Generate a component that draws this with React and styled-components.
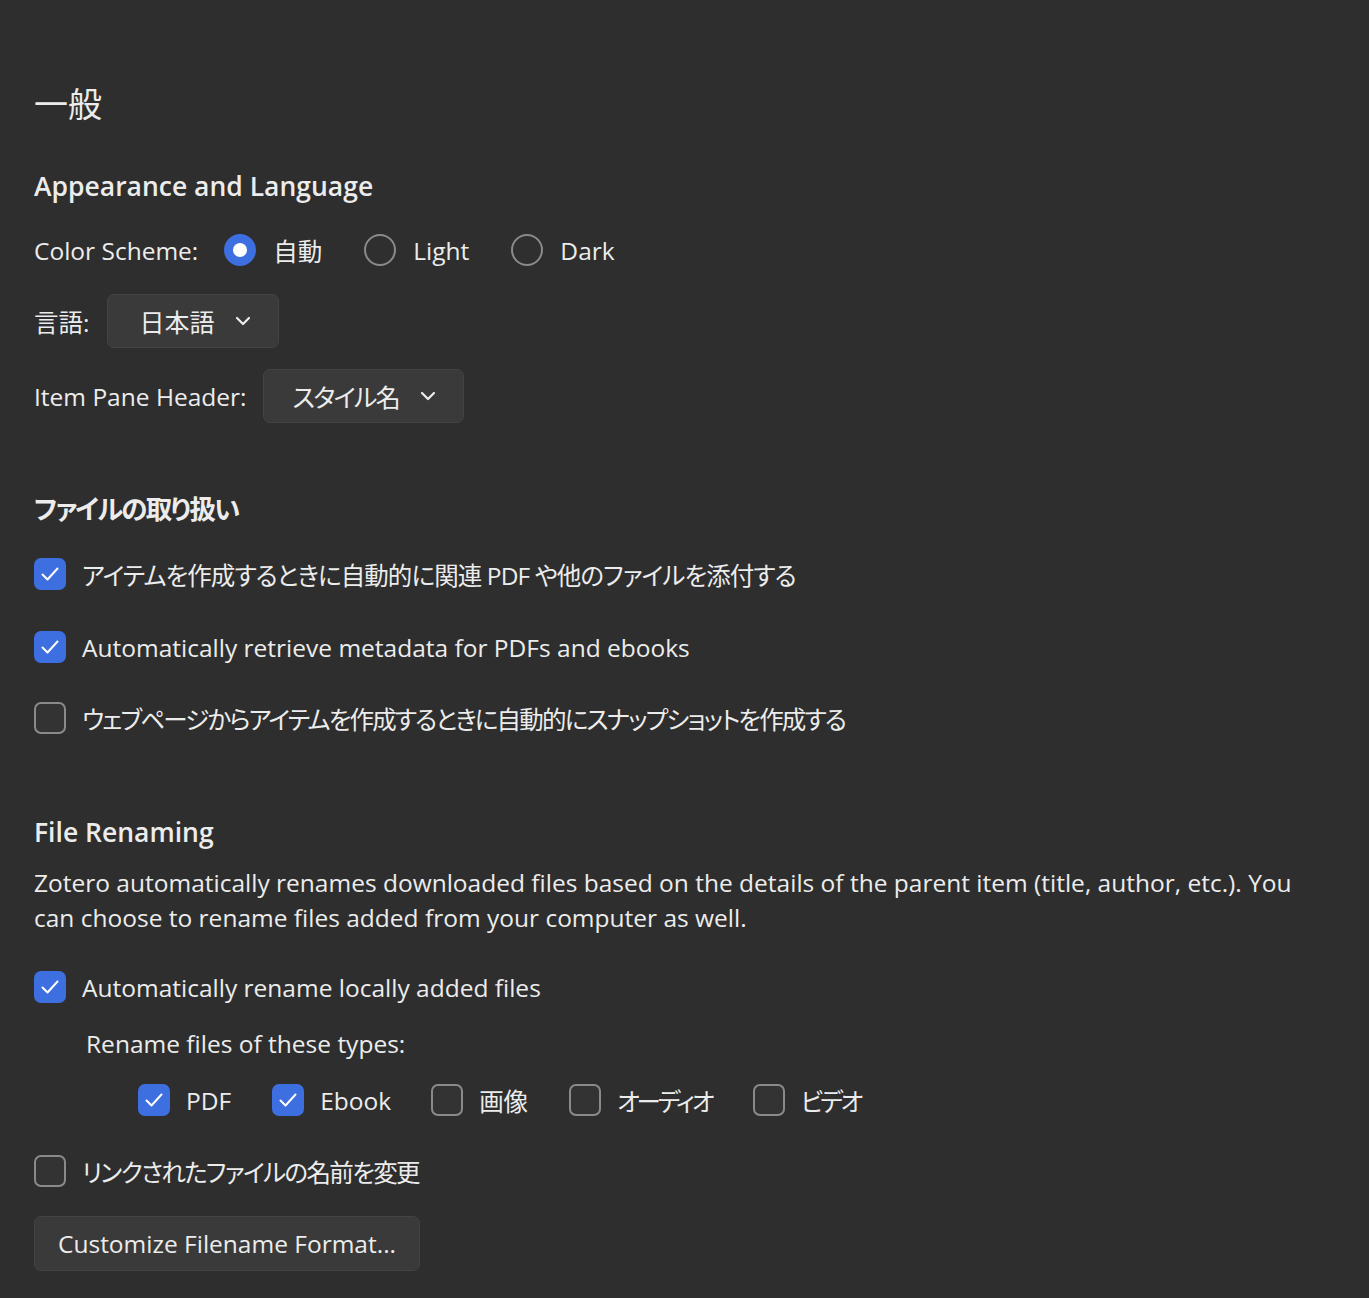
import React from "react";
import styled, { createGlobalStyle } from "styled-components";

const GlobalStyle = createGlobalStyle`
  html, body {
    margin: 0;
    padding: 0;
    background: #2e2e2e;
  }
  body {
    font-family: "Open Sans", "Noto Sans CJK JP", sans-serif;
    font-feature-settings: "palt";
    color: #ececec;
  }
`;

const Page = styled.div`
  padding: 80px 34px 26px;
  min-height: 1298px;
  box-sizing: border-box;
  background: #2e2e2e;
`;

const Title = styled.h1`
  margin: 0 0 38px;
  font-size: 34px;
  font-weight: 400;
  line-height: 48px;
`;

const SectionTitle = styled.h2`
  margin: 0 0 ${(p) => p.$gap || 26}px;
  font-size: 26.5px;
  font-weight: 600;
  line-height: 40px;
  letter-spacing: ${(p) => p.$ls || 0}px;
`;

const Section = styled.section`
  margin-bottom: ${(p) => p.$after || 0}px;
`;

const Row = styled.div`
  display: flex;
  align-items: center;
  gap: ${(p) => p.$gap || 18}px;
  min-height: ${(p) => p.$h || 40}px;
  margin-bottom: ${(p) => p.$mb || 0}px;
  padding-left: ${(p) => p.$indent || 0}px;
  font-size: 24.5px;
`;

const Label = styled.span`
  font-size: 24.5px;
  margin-right: ${(p) => p.$mr || 0}px;
`;

const Text = styled.span`
  letter-spacing: ${(p) => p.$ls || 0}px;
`;

const RadioItem = styled.label`
  display: flex;
  align-items: center;
  gap: 17px;
  margin-right: ${(p) => p.$mr || 24}px;
  font-size: 24.5px;
`;

const RadioDot = styled.span`
  width: 32px;
  height: 32px;
  border-radius: 50%;
  box-sizing: border-box;
  flex-shrink: 0;
  ${(p) =>
    p.$on
      ? `background: #fff; border: 9px solid #3e6fe0;`
      : `background: #2f2f2f; border: 2px solid #8a8a8a;`}
`;

const Select = styled.div`
  display: flex;
  align-items: center;
  height: 54px;
  box-sizing: border-box;
  padding: 0 26px 0 ${(p) => p.$pl || 31}px;
  background: #3a3a3a;
  border: 1px solid #434343;
  border-radius: 7px;
  font-size: 25px;
  gap: 20px;
`;

const CheckRow = styled.label`
  display: flex;
  align-items: center;
  gap: 16px;
  height: 40px;
  margin-left: ${(p) => p.$indent || 0}px;
  margin-bottom: ${(p) => p.$mb || 0}px;
  margin-right: ${(p) => p.$mr || 0}px;
  font-size: 24.5px;
  white-space: nowrap;
`;

const Box = styled.span`
  width: 32px;
  height: 32px;
  border-radius: 7px;
  box-sizing: border-box;
  flex-shrink: 0;
  display: flex;
  align-items: center;
  justify-content: center;
  ${(p) =>
    p.$on
      ? `background: #3e6fe0;`
      : `background: #333333; border: 2px solid #8a8a8a;`}
`;

const Paragraph = styled.p`
  margin: 0 0 32px;
  font-size: 24.5px;
  line-height: 35px;
  max-width: 1290px;
`;

const TypesRow = styled.div`
  display: flex;
  align-items: center;
  padding-left: 104px;
  margin-bottom: 31px;
`;

const Button = styled.button`
  display: block;
  height: 55px;
  padding: 0 23px;
  background: #3a3a3a;
  border: 1px solid #434343;
  border-radius: 7px;
  color: #ececec;
  font-family: inherit;
  font-size: 24.5px;
`;

const Chevron = () => (
  <svg width="18" height="18" viewBox="0 0 18 18" fill="none">
    <path d="M3 6L9 12L15 6" stroke="#ececec" strokeWidth="2.2" strokeLinecap="round" strokeLinejoin="round" />
  </svg>
);

const Check = () => (
  <svg width="22" height="22" viewBox="0 0 22 22" fill="none">
    <path d="M3.5 11.5L8.5 16.5L18.5 5.5" stroke="#fff" strokeWidth="2" strokeLinecap="round" strokeLinejoin="round" />
  </svg>
);

const Checkbox = ({ on, ls, children, ...rest }) => (
  <CheckRow {...rest}>
    <Box $on={on}>{on && <Check />}</Box>
    <Text $ls={ls}>{children}</Text>
  </CheckRow>
);

export default function App() {
  return (
    <Page>
      <GlobalStyle />
      <Title>一般</Title>

      <Section $after={66}>
        <SectionTitle $gap={24}>Appearance and Language</SectionTitle>
        <Row $mb={24} $gap={18}>
          <Label $mr={8}>Color Scheme:</Label>
          <RadioItem>
            <RadioDot $on />
            自動
          </RadioItem>
          <RadioItem>
            <RadioDot />
            Light
          </RadioItem>
          <RadioItem>
            <RadioDot />
            Dark
          </RadioItem>
        </Row>
        <Row $mb={21}>
          <Label>言語:</Label>
          <Select>
            日本語
            <Chevron />
          </Select>
        </Row>
        <Row $gap={16}>
          <Label>Item Pane Header:</Label>
          <Select $pl={29}>
            <Text $ls={-1.6}>スタイル名</Text>
            <Chevron />
          </Select>
        </Row>
      </Section>

      <Section $after={74}>
        <SectionTitle $gap={25} $ls={-1.8}>ファイルの取り扱い</SectionTitle>
        <Checkbox on ls={-0.9} $mb={33}>
          アイテムを作成するときに自動的に関連 PDF や他のファイルを添付する
        </Checkbox>
        <Checkbox on $mb={31}>
          Automatically retrieve metadata for PDFs and ebooks
        </Checkbox>
        <Checkbox ls={-1.8}>ウェブページからアイテムを作成するときに自動的にスナップショットを作成する</Checkbox>
      </Section>

      <Section>
        <SectionTitle $gap={13}>File Renaming</SectionTitle>
        <Paragraph>
          Zotero automatically renames downloaded files based on the details of the parent item (title, author, etc.). You can
          choose to rename files added from your computer as well.
        </Paragraph>
        <Checkbox on $mb={16}>
          Automatically rename locally added files
        </Checkbox>
        <Row $indent={52} $mb={17}>
          <Label>Rename files of these types:</Label>
        </Row>
        <TypesRow>
          <Checkbox on $mr={41}>PDF</Checkbox>
          <Checkbox on $mr={40}>Ebook</Checkbox>
          <Checkbox $mr={41}>画像</Checkbox>
          <Checkbox ls={-3} $mr={41}>オーディオ</Checkbox>
          <Checkbox ls={-2.7}>ビデオ</Checkbox>
        </TypesRow>
        <Checkbox ls={-1.6} $mb={25}>リンクされたファイルの名前を変更</Checkbox>
        <Button>Customize Filename Format...</Button>
      </Section>
    </Page>
  );
}
